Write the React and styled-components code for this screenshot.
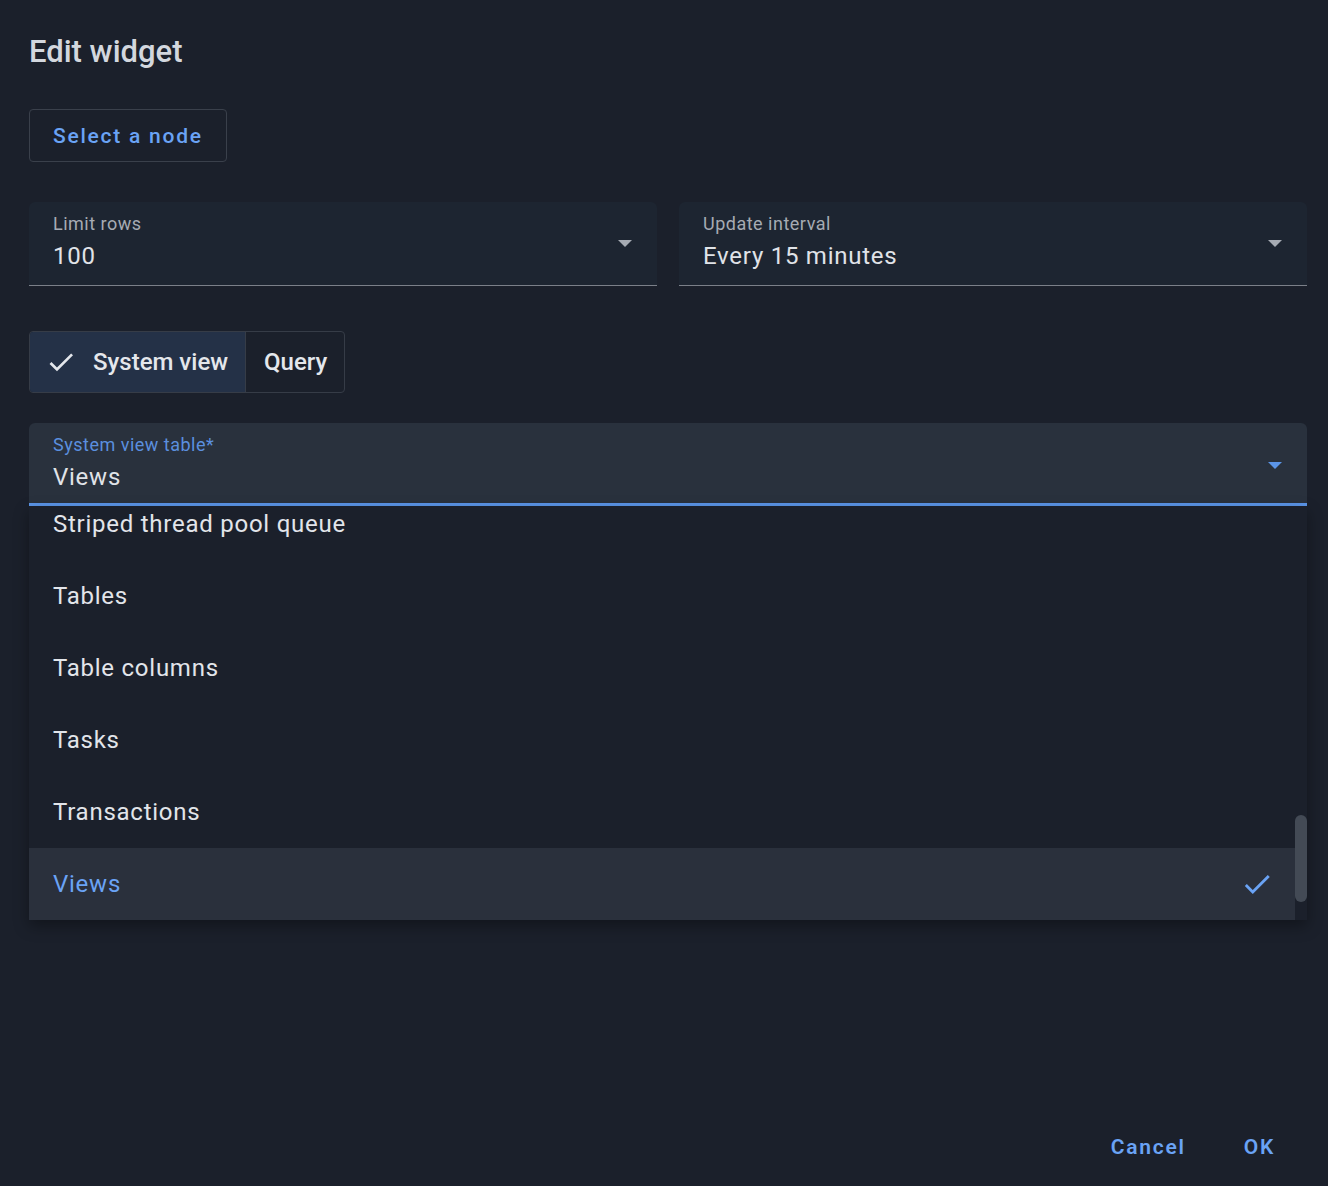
import React, { useLayoutEffect, useRef } from 'react';
import styled, { createGlobalStyle } from 'styled-components';

const GlobalStyle = createGlobalStyle`
    html, body {
        margin: 0;
        padding: 0;
        background: #1b202b;
    }
    body {
        font-family: Roboto, "Noto Sans", sans-serif;
        color: #e2e5ea;
    }
    * {
        box-sizing: border-box;
    }
`;

export const Dialog = styled.div`
    min-height: 100vh;
    display: flex;
    flex-direction: column;
    padding: 34px 21px 19px 29px;
`;

export const Title = styled.h2`
    margin: 0;
    font-size: 31px;
    line-height: 36px;
    font-weight: 500;
    color: #d3d7de;
`;

export const OutlinedButton = styled.button`
    align-self: flex-start;
    margin-top: 39px;
    height: 53px;
    padding: 0 23px;
    background: transparent;
    border: 1px solid #3a404b;
    border-radius: 4px;
    color: #6aa3f5;
    font-family: inherit;
    font-size: 21px;
    font-weight: 500;
    letter-spacing: 1.75px;
`;

export const FieldRow = styled.div`
    display: grid;
    grid-template-columns: 1fr 1fr;
    gap: 22px;
    margin-top: 40px;
`;

export const Field = styled.div`
    display: flex;
    align-items: center;
    justify-content: space-between;
    height: ${(p) => (p.$active ? '83px' : '84px')};
    padding: ${(p) => (p.$active ? '4px 25px 0 24px' : '0 25px 0 24px')};
    background: ${(p) => (p.$active ? '#29313d' : '#1d2531')};
    border-bottom: ${(p) => (p.$active ? '3px solid #5b95e8' : '1px solid #7b8089')};
    border-radius: 6px 6px 0 0;
`;

export const FieldText = styled.div`
    align-self: flex-start;
    display: flex;
    flex-direction: column;
    gap: 7px;
    margin-top: ${(p) => (p.$active ? '8px' : '12px')};
`;

export const FieldLabel = styled.span`
    font-size: 18px;
    line-height: 20px;
    letter-spacing: 0.5px;
    color: ${(p) => (p.$active ? '#5b8fdf' : '#a6abb3')};
`;

export const FieldValue = styled.span`
    font-size: 24px;
    line-height: 30px;
    letter-spacing: 0.75px;
    color: #e0e3e8;
`;

export const Arrow = styled.svg`
    width: 14px;
    height: 7px;
    fill: ${(p) => (p.$active ? '#5b95e8' : '#a6abb3')};
`;

export const ToggleGroup = styled.div`
    align-self: flex-start;
    display: flex;
    margin-top: 45px;
    height: 62px;
    border: 1px solid #363c47;
    border-radius: 4px;
    overflow: hidden;
`;

export const Segment = styled.div`
    display: flex;
    align-items: center;
    gap: 16px;
    padding: ${(p) => (p.$selected ? '0 17px 0 15px' : '0 17px 0 18px')};
    background: ${(p) => (p.$selected ? '#243147' : 'transparent')};
    font-size: 24px;
    font-weight: 500;
    color: #e4e7ec;
    & + & {
        border-left: 1px solid #363c47;
    }
`;

export const CheckIcon = styled.svg`
    width: ${(p) => p.$size}px;
    height: ${(p) => p.$size}px;
    fill: ${(p) => p.$color};
    flex-shrink: 0;
`;

export const SelectWrap = styled.div`
    position: relative;
    margin-top: 30px;
`;

export const Menu = styled.div`
    position: absolute;
    top: 100%;
    left: 0;
    right: 0;
    height: 414px;
    background: #1b202b;
    box-shadow: 0 6px 14px rgba(0, 0, 0, 0.35);
    z-index: 2;
`;

export const MenuList = styled.div`
    height: 100%;
    margin-right: 12px;
    overflow-y: scroll;
    scrollbar-width: none;
    &::-webkit-scrollbar {
        display: none;
    }
`;

export const MenuItem = styled.div`
    display: flex;
    align-items: center;
    justify-content: space-between;
    height: 72px;
    padding: 0 21px 0 24px;
    font-size: 24px;
    letter-spacing: 0.75px;
    background: ${(p) => (p.$selected ? '#2a303c' : 'transparent')};
    color: ${(p) => (p.$selected ? '#6aa3f5' : '#e2e5ea')};
`;

export const ScrollThumb = styled.div`
    position: absolute;
    right: 0;
    top: 309px;
    width: 12px;
    height: 87px;
    border-radius: 6px;
    background: #434a55;
`;

export const Footer = styled.div`
    margin-top: auto;
    margin-right: 8px;
    display: flex;
    justify-content: flex-end;
    gap: 10px;
`;

export const TextButton = styled.button`
    height: 40px;
    padding: 0 24px;
    background: transparent;
    border: none;
    color: #6aa3f5;
    font-family: inherit;
    font-size: 21px;
    font-weight: 600;
    letter-spacing: 1.75px;
`;

const CHECK_PATH = 'M9 16.17L4.83 12l-1.42 1.41L9 19 21 7l-1.41-1.41z';

const Check = ({ size, color }) => (
    <CheckIcon viewBox="0 0 24 24" $size={size} $color={color}>
        <path d={CHECK_PATH} />
    </CheckIcon>
);

const DropArrow = ({ active }) => (
    <Arrow viewBox="0 0 14 7" $active={active}>
        <path d="M0 0h14L7 7z" />
    </Arrow>
);

const systemViews = [
    'Baseline nodes',
    'Baseline node attributes',
    'Binary metadata',
    'Caches',
    'Cache groups',
    'Client connections',
    'Continuous queries',
    'Data region page lists',
    'Datastream thread pool queue',
    'Distributed metastorage',
    'Indexes',
    'Jobs',
    'Metastorage',
    'Nodes',
    'Node attributes',
    'Node metrics',
    'Partition states',
    'Scan queries',
    'Schemas',
    'Services',
    'SQL queries',
    'Striped thread pool queue',
    'Tables',
    'Table columns',
    'Tasks',
    'Transactions',
    'Views',
];

const App = () => {
    const listRef = useRef(null);
    const selected = 'Views';

    useLayoutEffect(() => {
        // keep the selected (last) item in view
        if (listRef.current) {
            listRef.current.scrollTop = listRef.current.scrollHeight;
        }
    }, []);

    return (
        <>
            <GlobalStyle />
            <Dialog>
                <Title>Edit widget</Title>
                <OutlinedButton>Select a node</OutlinedButton>

                <FieldRow>
                    <Field>
                        <FieldText>
                            <FieldLabel>Limit rows</FieldLabel>
                            <FieldValue>100</FieldValue>
                        </FieldText>
                        <DropArrow />
                    </Field>
                    <Field>
                        <FieldText>
                            <FieldLabel>Update interval</FieldLabel>
                            <FieldValue>Every 15 minutes</FieldValue>
                        </FieldText>
                        <DropArrow />
                    </Field>
                </FieldRow>

                <ToggleGroup>
                    <Segment $selected>
                        <Check size={32} color="#e4e7ec" />
                        System view
                    </Segment>
                    <Segment>Query</Segment>
                </ToggleGroup>

                <SelectWrap>
                    <Field $active>
                        <FieldText $active>
                            <FieldLabel $active>System view table*</FieldLabel>
                            <FieldValue>{selected}</FieldValue>
                        </FieldText>
                        <DropArrow active />
                    </Field>
                    <Menu>
                        <MenuList ref={listRef}>
                            {systemViews.map((name) => (
                                <MenuItem key={name} $selected={name === selected}>
                                    {name}
                                    {name === selected && <Check size={34} color="#6aa3f5" />}
                                </MenuItem>
                            ))}
                        </MenuList>
                        <ScrollThumb />
                    </Menu>
                </SelectWrap>

                <Footer>
                    <TextButton>Cancel</TextButton>
                    <TextButton>OK</TextButton>
                </Footer>
            </Dialog>
        </>
    );
};

export default App;
